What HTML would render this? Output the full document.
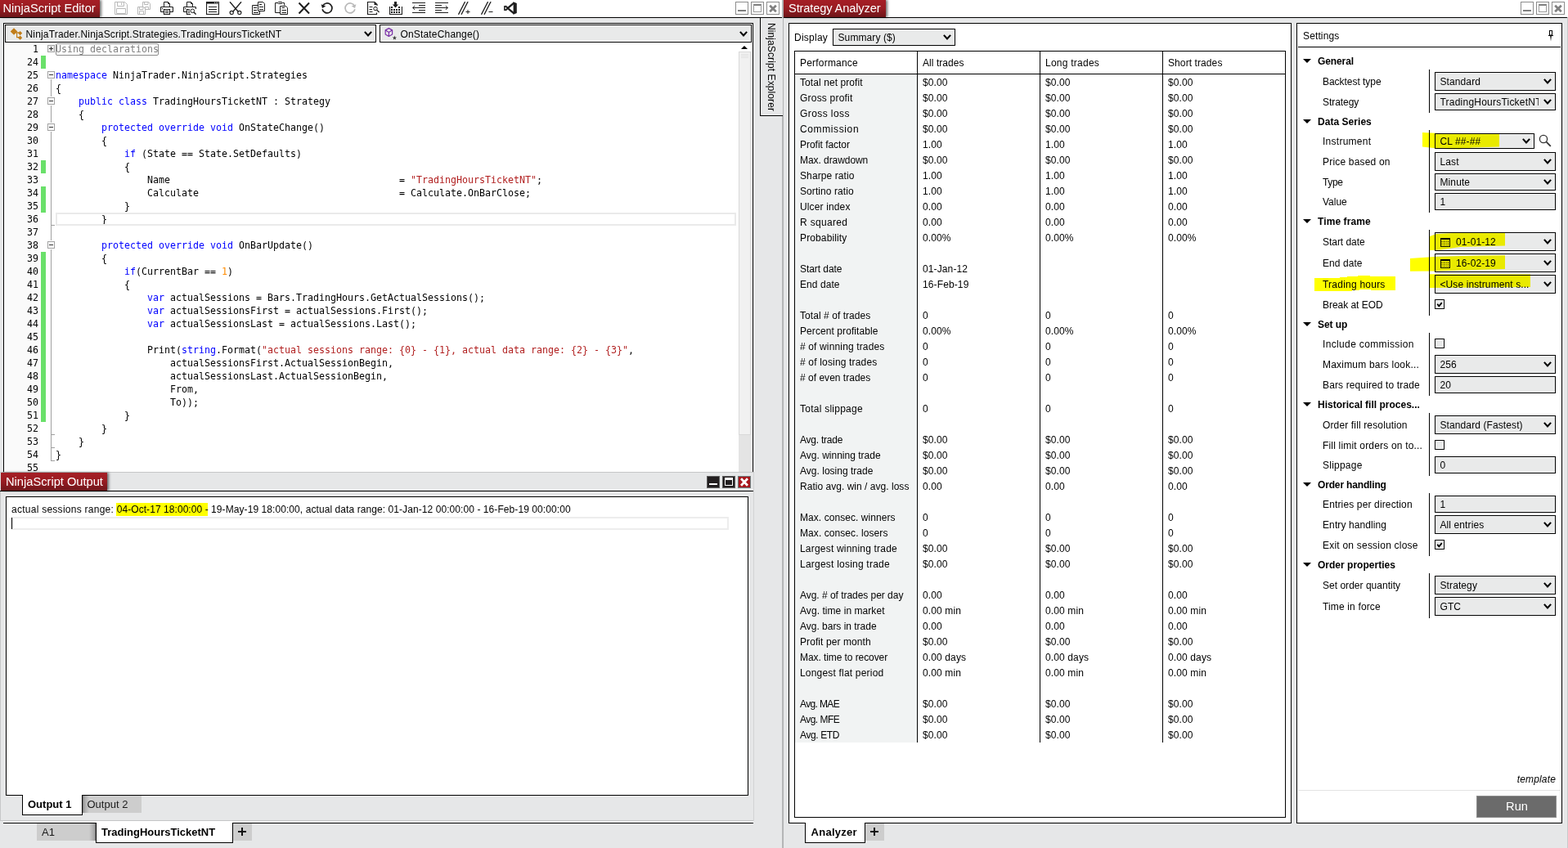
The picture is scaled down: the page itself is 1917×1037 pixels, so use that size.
<!DOCTYPE html><html><head><meta charset="utf-8"><title>NinjaScript Editor</title><style>
*{box-sizing:border-box;margin:0;padding:0}
html,body{width:1917px;height:1037px;overflow:hidden}
body{background:#E6E7E8;font-family:"Liberation Sans",Arial,sans-serif;font-size:12px;color:#000;position:relative}
.abs{position:absolute}
.ttl{position:absolute;height:21px;color:#fff;font-size:14.67px;line-height:21px;padding-left:4px;background:linear-gradient(#A51E25,#9A1C22 45%,#6E161A);box-shadow:2px 0 3px rgba(0,0,0,.55);white-space:nowrap}
.hl{position:absolute;background:#000;height:1px}
.vl{position:absolute;background:#000;width:1px}
.box{position:absolute;border:1px solid #000;background:#fff}
.sel{position:absolute;border:1px solid #000;background:#E9EAEA;box-shadow:inset 0 0 0 1px rgba(255,255,255,.25);font-size:12px;white-space:nowrap;overflow:hidden}
.sel.w{box-shadow:inset 0 0 0 1px #fff}
.sel span.t{position:absolute;left:5.5px;letter-spacing:.1px;top:50%;transform:translateY(-50%);line-height:14px}
.chev{position:absolute;right:4px;top:50%;margin-top:-3.5px;width:10px;height:7px;overflow:visible}
.code{position:absolute;font-family:"DejaVu Sans Mono","Liberation Mono",monospace;font-size:11.63px;line-height:16px;white-space:pre;color:#000;letter-spacing:0}
.kw{color:#0000ff}.st{color:#b22222}.nu{color:#ff8c00}.gy{color:#808080}
.ln{position:absolute;left:6px;width:41px;text-align:right;font-family:"DejaVu Sans Mono","Liberation Mono",monospace;font-size:11.63px;line-height:16px;height:16px;color:#000}
.gb{position:absolute;left:50px;width:6px;background:#6AE06A}
.fold{position:absolute;left:58px;width:9px;height:9px;border:1px solid #A2A2A2;background:#fff}
.fold i{position:absolute;left:1px;top:3px;width:5px;height:1px;background:#333}
.fold b{position:absolute;left:3px;top:1px;width:1px;height:5px;background:#333}
.wb{position:absolute;width:16px;height:16px;border:1px solid #8C8C8C;background:#fff}
.tab{position:absolute;font-size:13px;white-space:nowrap;line-height:21px}
.tab.on{background:#fff;border:1px solid #000;border-top:none;font-weight:bold;height:25px;padding-top:1px}
.tab.off{background:#CDCDCD;height:21px;color:#1a1a1a}
.plus{position:absolute;width:23px;height:21px;background:#CDCDCD}
.plus:before{content:'';position:absolute;left:6px;top:9px;width:10px;height:2px;background:#111}
.plus:after{content:'';position:absolute;left:10px;top:5px;width:2px;height:10px;background:#111}
.cell{position:absolute;font-size:12px;line-height:19px;height:19px;white-space:nowrap;letter-spacing:.12px;margin-top:1px}
.lbl{position:absolute;font-size:12px;line-height:14px;white-space:nowrap;left:1617px}
.grp{position:absolute;font-size:12px;font-weight:bold;line-height:14px;white-space:nowrap;left:1611px}
.tri{position:absolute;left:1592.5px;width:0;height:0;border-left:5px solid transparent;border-right:5px solid transparent;border-top:5.5px solid #000}
.cb{position:absolute;left:1754px;width:12px;height:12px;border:1px solid #000;background:#E9EAEA;box-shadow:inset 0 0 0 1px #fff}
.yl{position:absolute;background:#ffff00;mix-blend-mode:multiply}
</style></head><body>
<div class="hl" style="left:0;top:21px;width:956px"></div>
<div class="abs" style="left:0;top:0;width:956px;height:21px;background:#fff"></div>
<div class="abs" style="left:958px;top:0;width:959px;height:21px;background:#fff"></div>
<div class="ttl" style="left:0;top:0;width:122px;padding-left:3.5px">NinjaScript Editor</div>
<svg class="abs" style="left:140px;top:2px" width="16" height="16" viewBox="0 0 16 16" fill="none" stroke-linecap="butt"><path d="M0.5 0.5H12.5L15.5 3.5V15.5H0.5Z M3.5 0.5V5.5H11.5V0.5 M2.5 14.5V8.5H13.5V14.5Z" stroke="#B9B9B9"/><path d="M8.5 1.5V4" stroke="#B9B9B9"/></svg>
<svg class="abs" style="left:168px;top:2px" width="16" height="16" viewBox="0 0 16 16" fill="none" stroke-linecap="butt"><path d="M6.5 6V0.5H13.5L15.5 2.5V9.5H10 M8.5 0.5V3.5H13V0.5 M9.5 9.5V6.5H13.5V9.5" stroke="#B9B9B9"/><path d="M0.5 6.5H7.5L9.5 8.5V15.5H0.5Z M2.5 6.5V9.5H7V6.5 M2.5 15.5V11.5H7.5V15.5" stroke="#B9B9B9"/></svg>
<svg class="abs" style="left:196px;top:2px" width="16" height="16" viewBox="0 0 16 16" fill="none" stroke-linecap="butt"><path d="M4.5 6.5V0.5H9.5L11.5 2.5V6.5" stroke="#1e1e1e"/><path d="M9.5 0.5V2.5H11.5" stroke="#1e1e1e"/><path d="M4.5 12.5H1.5Q0.5 12.5 0.5 11.5V7.5Q0.5 6.5 1.5 6.5H14.5Q15.5 6.5 15.5 7.5V11.5Q15.5 12.5 14.5 12.5H11.5" stroke="#1e1e1e" stroke-width="1.2"/><path d="M4.5 9.5H11.5V15.5H4.5Z" stroke="#1e1e1e" stroke-width="1.2"/><path d="M6 11.5H10M6 13.5H10" stroke="#1e1e1e"/><rect x="2" y="8" width="1.2" height="1.2" fill="#1e1e1e"/></svg>
<svg class="abs" style="left:224px;top:2px" width="16" height="16" viewBox="0 0 16 16" fill="none" stroke-linecap="butt"><path d="M4.5 6.5V0.5H9.5L11.5 2.5V6.5" stroke="#1e1e1e"/><path d="M9.5 0.5V2.5H11.5" stroke="#1e1e1e"/><path d="M4.5 12.5H1.5Q0.5 12.5 0.5 11.5V7.5Q0.5 6.5 1.5 6.5H14.5Q15.5 6.5 15.5 7.5V9" stroke="#1e1e1e" stroke-width="1.2"/><path d="M8 9.5H4.5V15.5H9" stroke="#1e1e1e" stroke-width="1.2"/><path d="M6 11.5H8M6 13.5H8" stroke="#1e1e1e"/><rect x="2" y="8" width="1.2" height="1.2" fill="#1e1e1e"/><circle cx="11.3" cy="11.3" r="2.3" stroke="#1e1e1e" fill="#fff"/><path d="M13 13L15.6 15.6" stroke="#1e1e1e" stroke-width="1.4"/></svg>
<svg class="abs" style="left:252px;top:2px" width="16" height="16" viewBox="0 0 16 16" fill="none" stroke-linecap="butt"><rect x="0.5" y="0.5" width="15" height="15" stroke="#1e1e1e" stroke-width="1.2"/><rect x="0" y="0" width="16" height="2.6" fill="#1e1e1e"/><path d="M10 1.3h1M12 1.3h1M14 1.3h1" stroke="#fff"/><path d="M3 6.5H13M3 9.5H13M3 12.5H13" stroke="#1e1e1e"/></svg>
<svg class="abs" style="left:280px;top:2px" width="16" height="16" viewBox="0 0 16 16" fill="none" stroke-linecap="butt"><path d="M1 0.3L11.2 12.2M15 0.3L4.8 12.2" stroke="#1e1e1e" stroke-width="1.4"/><circle cx="3.2" cy="13.4" r="2.1" stroke="#1e1e1e" stroke-width="1.2"/><circle cx="12.8" cy="13.4" r="2.1" stroke="#1e1e1e" stroke-width="1.2"/></svg>
<svg class="abs" style="left:308px;top:2px" width="16" height="16" viewBox="0 0 16 16" fill="none" stroke-linecap="butt"><path d="M7.5 0.5H13.5L15.5 2.5V11.5H7.5Z" stroke="#1e1e1e" fill="#fff"/><path d="M9 3.5H12M9 6.5H14M9 9.5H14" stroke="#1e1e1e"/><path d="M7.5 4.5H0.5V15.5H9.5V11.5" stroke="#1e1e1e"/><path d="M2 7.5H6M2 10.5H6M2 13.5H8" stroke="#1e1e1e"/></svg>
<svg class="abs" style="left:336px;top:2px" width="16" height="16" viewBox="0 0 16 16" fill="none" stroke-linecap="butt"><path d="M3 1.5H0.5V13.5H6.5M9.5 1.5H11.5V4.5" stroke="#1e1e1e"/><rect x="3.5" y="0.5" width="5.5" height="2" rx="1" stroke="#1e1e1e"/><path d="M6.5 5.5H13.5L15.5 7.5V15.5H6.5Z" stroke="#1e1e1e"/><path d="M8.5 7.5H12M8.5 10.5H14M8.5 13.5H14" stroke="#1e1e1e"/></svg>
<svg class="abs" style="left:364px;top:2px" width="16" height="16" viewBox="0 0 16 16" fill="none" stroke-linecap="butt"><path d="M1.5 1.5L14 14.5M14 1.5L1.5 14.5" stroke="#1e1e1e" stroke-width="2"/></svg>
<svg class="abs" style="left:392px;top:2px" width="16" height="16" viewBox="0 0 16 16" fill="none" stroke-linecap="butt"><path d="M2.6 5.2A6 6 0 1 1 2.1 9.2" stroke="#1e1e1e" stroke-width="1.7"/><path d="M0.6 3.2L2 8L6.3 5.6Z" fill="#1e1e1e"/></svg>
<svg class="abs" style="left:420px;top:2px" width="16" height="16" viewBox="0 0 16 16" fill="none" stroke-linecap="butt"><path d="M13.4 5.2A6 6 0 1 0 13.9 9.2" stroke="#B9B9B9" stroke-width="1.7"/><path d="M15.4 3.2L14 8L9.7 5.6Z" fill="#B9B9B9"/></svg>
<svg class="abs" style="left:448px;top:2px" width="16" height="16" viewBox="0 0 16 16" fill="none" stroke-linecap="butt"><path d="M13 5V3.5L10 0.5H1.5V15.5H12.5V13.5" stroke="#1e1e1e" stroke-width="1.2"/><path d="M9.5 0.5L13 4H9.5Z" fill="#1e1e1e"/><path d="M3.5 6.5H7.5M3.5 9.5H7M3.5 12.5H7.5" stroke="#1e1e1e"/><circle cx="11" cy="8.6" r="2.2" stroke="#1e1e1e"/><path d="M12.7 10.3L15.6 13" stroke="#1e1e1e" stroke-width="1.3"/></svg>
<svg class="abs" style="left:476px;top:2px" width="16" height="16" viewBox="0 0 16 16" fill="none" stroke-linecap="butt"><path d="M0.5 6V15.5H15.5V6" stroke="#1e1e1e" stroke-width="1.2"/><path d="M7.5 7.6L3.8 3.4H6V0H9V3.4H11.2Z" fill="#1e1e1e"/><rect x="2" y="6" width="2" height="2" fill="#1e1e1e"/><rect x="11" y="6" width="2" height="2" fill="#1e1e1e"/><rect x="2" y="9" width="2" height="2" fill="#1e1e1e"/><rect x="5" y="9" width="2" height="2" fill="#1e1e1e"/><rect x="8" y="9" width="2" height="2" fill="#1e1e1e"/><rect x="11" y="9" width="2" height="2" fill="#1e1e1e"/><rect x="2" y="12" width="2" height="2" fill="#1e1e1e"/><rect x="5" y="12" width="2" height="2" fill="#1e1e1e"/><rect x="8" y="12" width="2" height="2" fill="#1e1e1e"/><rect x="11" y="12" width="2" height="2" fill="#1e1e1e"/></svg>
<svg class="abs" style="left:504px;top:2px" width="16" height="16" viewBox="0 0 16 16" fill="none" stroke-linecap="butt"><path d="M0 1.5H16M8 4.5H16M4 7.5H16M8 10.5H16M0 13.5H16" stroke="#1e1e1e"/><path d="M0.7 7.5H5M3.2 5L0.7 7.5L3.2 10" stroke="#1e1e1e"/></svg>
<svg class="abs" style="left:532px;top:2px" width="16" height="16" viewBox="0 0 16 16" fill="none" stroke-linecap="butt"><path d="M0 1.5H16M0 4.5H8M0 7.5H12M0 10.5H8M0 13.5H16" stroke="#1e1e1e"/><path d="M15.3 7.5H11M12.8 5L15.3 7.5L12.8 10" stroke="#1e1e1e"/></svg>
<svg class="abs" style="left:560px;top:2px" width="16" height="16" viewBox="0 0 16 16" fill="none" stroke-linecap="butt"><path d="M0.5 15.8L8.6 0M4 15.8L12.1 0" stroke="#1e1e1e" stroke-width="1.3"/><path d="M9.5 12.5H14.5M12 10V15" stroke="#1e1e1e"/></svg>
<svg class="abs" style="left:588px;top:2px" width="16" height="16" viewBox="0 0 16 16" fill="none" stroke-linecap="butt"><path d="M0.5 15.8L8.6 0M4 15.8L12.1 0" stroke="#1e1e1e" stroke-width="1.3"/><path d="M9.5 12.5H14.5" stroke="#1e1e1e"/></svg>
<svg class="abs" style="left:616px;top:2px" width="16" height="16" viewBox="0 0 16 16" fill="none" stroke-linecap="butt"><path d="M12.6 1.4L1.6 10.6M12.6 14.6L1.6 5.4" stroke="#1e1e1e" stroke-width="2.3"/><path d="M11.6 0.2L15.8 2V14L11.6 15.8Z" fill="#1e1e1e"/><path d="M0.9 5V11" stroke="#1e1e1e" stroke-width="1.6"/><path d="M1.9 6.6L3.4 8L1.9 9.4Z" fill="#fff"/></svg>
<div class="abs" style="left:956px;top:0;width:2px;height:1037px;background:linear-gradient(90deg,#BCBDBE,#ADAEAF)"></div>
<div class="abs" style="left:0;top:601px;width:1px;height:403px;background:#C6C7C8"></div>
<div class="wb" style="left:899px;top:2px"><div class="abs" style="left:2px;top:9px;width:10px;height:2px;background:#808080"></div></div>
<div class="wb" style="left:918px;top:2px"><div class="abs" style="left:2px;top:2px;width:10px;height:10px;border:1px solid #9a9a9a;border-top:2px solid #808080"></div></div>
<div class="wb" style="left:937px;top:2px"><svg class="abs" style="left:1px;top:2px" width="12" height="11" viewBox="0 0 12 11"><path d="M2.2 1.7L9.8 9.3M9.8 1.7L2.2 9.3" stroke="#808080" stroke-width="2.7"/></svg></div>
<div class="box" style="left:4px;top:28px;width:917px;height:549px;border-bottom:none"></div>
<div class="abs" style="left:7px;top:52px;width:42px;height:525px;background:#FAFAFA"></div>
<div class="sel w" style="left:6px;top:30px;width:454px;height:22px"><svg class="abs" style="left:4px;top:1.5px" width="17" height="17" viewBox="0 0 17 17"><path d="M6 1.2L10.3 5.5L6 9.8L1.7 5.5Z" fill="#C17D1A"/><path d="M13.6 5L16.2 7.6L13.6 10.2L11 7.6Z M13.6 10.6L16.2 13.2L13.6 15.8L11 13.2Z" fill="#C17D1A"/><path d="M8 6.9H12M9.6 6.9V12.6H12" stroke="#C17D1A" stroke-width="1.2" fill="none"/></svg><span class="t" style="left:24.5px;letter-spacing:.17px;margin-top:1px">NinjaTrader.NinjaScript.Strategies.TradingHoursTicketNT</span><svg class="chev" viewBox="0 0 10 7"><path d="M0.9 0.9 L5 5.5 L9.1 0.9" fill="none" stroke="#000" stroke-width="2.1"/></svg></div>
<div class="sel w" style="left:464px;top:30px;width:455px;height:22px"><svg class="abs" style="left:4px;top:2px" width="18" height="17" viewBox="0 0 18 17"><path d="M6.4 1.6L10.6 3.9V8.9L6.4 11.4L2.2 8.9V3.9Z M2.4 4L6.4 6.4L10.4 4 M6.4 6.4V11.2" fill="none" stroke="#7A2FA8" stroke-width="1.2" stroke-linejoin="round"/><path d="M13.4 10.6L14.1 12.6H16.1L14.5 13.8L15.1 15.8L13.4 14.6L11.7 15.8L12.3 13.8L10.7 12.6H12.7Z" fill="#3a3a3a"/></svg><span class="t" style="left:24.5px;letter-spacing:.17px;margin-top:1px">OnStateChange()</span><svg class="chev" viewBox="0 0 10 7"><path d="M0.9 0.9 L5 5.5 L9.1 0.9" fill="none" stroke="#000" stroke-width="2.1"/></svg></div>
<div class="ln" style="top:52px">1</div>
<div class="code" style="left:68px;top:52px"><span class="gy">Using declarations</span></div>
<div class="ln" style="top:68px">24</div>
<div class="gb" style="top:68px;height:16px"></div>
<div class="ln" style="top:84px">25</div>
<div class="code" style="left:68px;top:84px"><span class="kw">namespace</span> NinjaTrader.NinjaScript.Strategies</div>
<div class="ln" style="top:100px">26</div>
<div class="code" style="left:68px;top:100px">{</div>
<div class="ln" style="top:116px">27</div>
<div class="code" style="left:68px;top:116px">    <span class="kw">public</span> <span class="kw">class</span> TradingHoursTicketNT : Strategy</div>
<div class="ln" style="top:132px">28</div>
<div class="code" style="left:68px;top:132px">    {</div>
<div class="ln" style="top:148px">29</div>
<div class="code" style="left:68px;top:148px">        <span class="kw">protected</span> <span class="kw">override</span> <span class="kw">void</span> OnStateChange()</div>
<div class="ln" style="top:164px">30</div>
<div class="code" style="left:68px;top:164px">        {</div>
<div class="ln" style="top:180px">31</div>
<div class="code" style="left:68px;top:180px">            <span class="kw">if</span> (State == State.SetDefaults)</div>
<div class="ln" style="top:196px">32</div>
<div class="gb" style="top:196px;height:16px"></div>
<div class="code" style="left:68px;top:196px">            {</div>
<div class="ln" style="top:212px">33</div>
<div class="code" style="left:68px;top:212px">                Name                                        = <span class="st">&quot;TradingHoursTicketNT&quot;</span>;</div>
<div class="ln" style="top:228px">34</div>
<div class="gb" style="top:228px;height:16px"></div>
<div class="code" style="left:68px;top:228px">                Calculate                                   = Calculate.OnBarClose;</div>
<div class="ln" style="top:244px">35</div>
<div class="gb" style="top:244px;height:16px"></div>
<div class="code" style="left:68px;top:244px">            }</div>
<div class="ln" style="top:260px">36</div>
<div class="code" style="left:68px;top:260px">        }</div>
<div class="ln" style="top:276px">37</div>
<div class="ln" style="top:292px">38</div>
<div class="code" style="left:68px;top:292px">        <span class="kw">protected</span> <span class="kw">override</span> <span class="kw">void</span> OnBarUpdate()</div>
<div class="ln" style="top:308px">39</div>
<div class="gb" style="top:308px;height:16px"></div>
<div class="code" style="left:68px;top:308px">        {</div>
<div class="ln" style="top:324px">40</div>
<div class="gb" style="top:324px;height:16px"></div>
<div class="code" style="left:68px;top:324px">            <span class="kw">if</span>(CurrentBar == <span class="nu">1</span>)</div>
<div class="ln" style="top:340px">41</div>
<div class="gb" style="top:340px;height:16px"></div>
<div class="code" style="left:68px;top:340px">            {</div>
<div class="ln" style="top:356px">42</div>
<div class="gb" style="top:356px;height:16px"></div>
<div class="code" style="left:68px;top:356px">                <span class="kw">var</span> actualSessions = Bars.TradingHours.GetActualSessions();</div>
<div class="ln" style="top:372px">43</div>
<div class="gb" style="top:372px;height:16px"></div>
<div class="code" style="left:68px;top:372px">                <span class="kw">var</span> actualSessionsFirst = actualSessions.First();</div>
<div class="ln" style="top:388px">44</div>
<div class="gb" style="top:388px;height:16px"></div>
<div class="code" style="left:68px;top:388px">                <span class="kw">var</span> actualSessionsLast = actualSessions.Last();</div>
<div class="ln" style="top:404px">45</div>
<div class="gb" style="top:404px;height:16px"></div>
<div class="ln" style="top:420px">46</div>
<div class="gb" style="top:420px;height:16px"></div>
<div class="code" style="left:68px;top:420px">                Print(<span class="kw">string</span>.Format(<span class="st">&quot;actual sessions range: {0} - {1}, actual data range: {2} - {3}&quot;</span>,</div>
<div class="ln" style="top:436px">47</div>
<div class="gb" style="top:436px;height:16px"></div>
<div class="code" style="left:68px;top:436px">                    actualSessionsFirst.ActualSessionBegin,</div>
<div class="ln" style="top:452px">48</div>
<div class="gb" style="top:452px;height:16px"></div>
<div class="code" style="left:68px;top:452px">                    actualSessionsLast.ActualSessionBegin,</div>
<div class="ln" style="top:468px">49</div>
<div class="gb" style="top:468px;height:16px"></div>
<div class="code" style="left:68px;top:468px">                    From,</div>
<div class="ln" style="top:484px">50</div>
<div class="gb" style="top:484px;height:16px"></div>
<div class="code" style="left:68px;top:484px">                    To));</div>
<div class="ln" style="top:500px">51</div>
<div class="gb" style="top:500px;height:16px"></div>
<div class="code" style="left:68px;top:500px">            }</div>
<div class="ln" style="top:516px">52</div>
<div class="code" style="left:68px;top:516px">        }</div>
<div class="ln" style="top:532px">53</div>
<div class="code" style="left:68px;top:532px">    }</div>
<div class="ln" style="top:548px">54</div>
<div class="code" style="left:68px;top:548px">}</div>
<div class="ln" style="top:564px">55</div>
<div class="abs" style="left:68px;top:260px;width:832px;height:16px;border:2px solid #EAEAEA"></div>
<div class="abs" style="left:68px;top:52.7px;width:126px;height:15.3px;border:1px solid #8c8c8c;border-radius:2px"></div>
<div class="fold" style="top:55px;background:#ECECEC"><i></i><b></b></div>
<div class="fold" style="top:87px"><i></i></div>
<div class="fold" style="top:119px"><i></i></div>
<div class="fold" style="top:151px"><i></i></div>
<div class="fold" style="top:295px"><i></i></div>
<div class="abs" style="left:62px;top:97px;width:1px;height:21px;background:#A0A0A0"></div>
<div class="abs" style="left:62px;top:129px;width:1px;height:21px;background:#A0A0A0"></div>
<div class="abs" style="left:62px;top:161px;width:1px;height:133px;background:#A0A0A0"></div>
<div class="abs" style="left:62px;top:305px;width:1px;height:243px;background:#A0A0A0"></div>
<div class="abs" style="left:62px;top:275px;width:5px;height:1px;background:#A0A0A0"></div>
<div class="abs" style="left:62px;top:531px;width:5px;height:1px;background:#A0A0A0"></div>
<div class="abs" style="left:62px;top:547px;width:5px;height:1px;background:#A0A0A0"></div>
<div class="abs" style="left:62px;top:563px;width:5px;height:1px;background:#A0A0A0"></div>
<div class="abs" style="left:62px;top:548px;width:1px;height:16px;background:#A0A0A0"></div>
<div class="abs" style="left:903px;top:52px;width:16px;height:525px;background:#fff"></div>
<div class="abs" style="left:903px;top:63px;width:15px;height:469px;background:#F1F1F1;border:1px solid #D9D9D9"></div>
<div class="abs" style="left:906px;top:66px;width:9px;height:1px;background:#E2E2E2;box-shadow:0 2px 0 #E2E2E2,0 4px 0 #E2E2E2"></div>
<div class="abs" style="left:906px;top:56px;width:0;height:0;border-left:4px solid transparent;border-right:4px solid transparent;border-bottom:4px solid #000"></div>
<div class="abs" style="left:903px;top:532px;width:15px;height:45px;background:#E4E4E4"></div>
<div class="abs" style="left:929px;top:22px;width:28px;height:120px;border:1px solid #000;border-top:none;border-right:none;background:#E6E7E8"></div>
<div class="abs" style="left:933.5px;top:28px;width:18px;height:110px;writing-mode:vertical-rl;font-size:12px;line-height:18px;white-space:nowrap;letter-spacing:.1px">NinjaScript Explorer</div>
<div class="abs" style="left:0;top:577px;width:922px;height:1px;background:#C6C7C8"></div>
<div class="ttl" style="left:1px;top:578px;width:130px;height:22px;line-height:22px;padding-left:6px">NinjaScript Output</div>
<div class="hl" style="left:0;top:600px;width:921px"></div>
<div class="abs" style="left:921px;top:578px;width:1px;height:426px;background:#D2D3D4"></div>
<div class="box" style="left:7px;top:607px;width:908px;height:366px"></div>
<div class="abs" style="left:142px;top:615px;width:112px;height:16px;background:#ffff00"></div>
<div class="abs" style="left:14px;top:615px;font-size:12px;line-height:16px;white-space:pre"><span style="letter-spacing:0.259px">actual sessions range: </span><span style="letter-spacing:0.063px">04-Oct-17 18:00:00 - </span><span style="letter-spacing:0.076px">19-May-19 18:00:00, actual data range: 01-Jan-12 00:00:00 - 16-Feb-19 00:00:00</span></div>
<div class="abs" style="left:14px;top:632px;width:877px;height:16px;border:2px solid #EDEDED"></div>
<div class="abs" style="left:14px;top:633px;width:1px;height:14px;background:#000"></div>
<div class="abs" style="left:864px;top:582px;width:16px;height:15px;background:#231F20;border:1px solid #5f5f5f"><div class="abs" style="left:2px;top:8px;width:10px;height:2px;background:#fff"></div></div>
<div class="abs" style="left:883px;top:582px;width:16px;height:15px;background:#231F20;border:1px solid #5f5f5f"><div class="abs" style="left:2px;top:1px;width:10px;height:10px;border:1px solid #fff;border-top:3px solid #fff"></div></div>
<div class="abs" style="left:902px;top:582px;width:16px;height:15px;background:#A8171D;border:1px solid #6d7c7c"><svg class="abs" style="left:2px;top:1px" width="10" height="11" viewBox="0 0 10 11"><path d="M1 1.2L9 9.8M9 1.2L1 9.8" stroke="#fff" stroke-width="2.8"/></svg></div>
<div class="tab on" style="left:27px;top:972px;width:74px;padding-left:6px">Output 1</div>
<div class="tab off" style="left:101px;top:973px;width:72px;padding-left:5.5px;background:linear-gradient(90deg,#777 0,#a8a8a8 2px,#CDCDCD 8px)">Output 2</div>
<div class="abs" style="left:0;top:1003px;width:921px;height:1px;background:#C4C5C6"></div>
<div class="abs" style="left:4px;top:1004px;width:917px;height:2px;background:#fff"></div>
<div class="hl" style="left:4px;top:1006px;width:917px"></div>
<div class="tab off" style="left:45px;top:1007px;width:72px;padding-left:6px;background:linear-gradient(270deg,#777 0,#a8a8a8 2px,#CDCDCD 8px)">A1</div>
<div class="tab on" style="left:117px;top:1006px;width:168px;padding-left:6px">TradingHoursTicketNT</div>
<div class="plus" style="left:285px;top:1007px"></div>
<div class="ttl" style="left:958px;top:0;width:125px;padding-left:6px;letter-spacing:-.14px">Strategy Analyzer</div>
<div class="hl" style="left:958px;top:21px;width:959px"></div>
<div class="wb" style="left:1859px;top:2px"><div class="abs" style="left:2px;top:9px;width:10px;height:2px;background:#808080"></div></div>
<div class="wb" style="left:1878px;top:2px"><div class="abs" style="left:2px;top:2px;width:10px;height:10px;border:1px solid #9a9a9a;border-top:2px solid #808080"></div></div>
<div class="wb" style="left:1897px;top:2px"><svg class="abs" style="left:1px;top:2px" width="12" height="11" viewBox="0 0 12 11"><path d="M2.2 1.7L9.8 9.3M9.8 1.7L2.2 9.3" stroke="#808080" stroke-width="2.7"/></svg></div>
<div class="box" style="left:964px;top:28px;width:615px;height:979px"></div>
<div class="abs" style="left:971px;top:39px;font-size:12px;line-height:14px;letter-spacing:.25px">Display</div>
<div class="sel" style="left:1018px;top:35px;width:150px;height:21px"><span class="t">Summary ($)</span><svg class="chev" viewBox="0 0 10 7"><path d="M0.9 0.9 L5 5.5 L9.1 0.9" fill="none" stroke="#000" stroke-width="2.1"/></svg></div>
<div class="box" style="left:971px;top:62px;width:601px;height:938px"></div>
<div class="abs" style="left:972px;top:91px;width:149px;height:817px;background:#F1F3F3"></div>
<div class="hl" style="left:971px;top:90px;width:601px"></div>
<div class="vl" style="left:1121px;top:62px;height:846px"></div>
<div class="vl" style="left:1271px;top:62px;height:846px"></div>
<div class="vl" style="left:1421px;top:62px;height:846px"></div>
<div class="cell" style="left:978px;top:67px;letter-spacing:0.2px">Performance</div>
<div class="cell" style="left:1128px;top:67px;letter-spacing:0.052px">All trades</div>
<div class="cell" style="left:1278px;top:67px;letter-spacing:0.241px">Long trades</div>
<div class="cell" style="left:1428px;top:67px;letter-spacing:0.093px">Short trades</div>
<div class="cell" style="left:978px;top:91px;letter-spacing:0.082px">Total net profit</div>
<div class="cell" style="left:1128px;top:91px">$0.00</div>
<div class="cell" style="left:1278px;top:91px">$0.00</div>
<div class="cell" style="left:1428px;top:91px">$0.00</div>
<div class="cell" style="left:978px;top:110px;letter-spacing:0.208px">Gross profit</div>
<div class="cell" style="left:1128px;top:110px">$0.00</div>
<div class="cell" style="left:1278px;top:110px">$0.00</div>
<div class="cell" style="left:1428px;top:110px">$0.00</div>
<div class="cell" style="left:978px;top:129px;letter-spacing:0.412px">Gross loss</div>
<div class="cell" style="left:1128px;top:129px">$0.00</div>
<div class="cell" style="left:1278px;top:129px">$0.00</div>
<div class="cell" style="left:1428px;top:129px">$0.00</div>
<div class="cell" style="left:978px;top:148px;letter-spacing:0.62px">Commission</div>
<div class="cell" style="left:1128px;top:148px">$0.00</div>
<div class="cell" style="left:1278px;top:148px">$0.00</div>
<div class="cell" style="left:1428px;top:148px">$0.00</div>
<div class="cell" style="left:978px;top:167px;letter-spacing:-0.03px">Profit factor</div>
<div class="cell" style="left:1128px;top:167px">1.00</div>
<div class="cell" style="left:1278px;top:167px">1.00</div>
<div class="cell" style="left:1428px;top:167px">1.00</div>
<div class="cell" style="left:978px;top:186px;letter-spacing:-0.062px">Max. drawdown</div>
<div class="cell" style="left:1128px;top:186px">$0.00</div>
<div class="cell" style="left:1278px;top:186px">$0.00</div>
<div class="cell" style="left:1428px;top:186px">$0.00</div>
<div class="cell" style="left:978px;top:205px;letter-spacing:0.102px">Sharpe ratio</div>
<div class="cell" style="left:1128px;top:205px">1.00</div>
<div class="cell" style="left:1278px;top:205px">1.00</div>
<div class="cell" style="left:1428px;top:205px">1.00</div>
<div class="cell" style="left:978px;top:224px;letter-spacing:0.075px">Sortino ratio</div>
<div class="cell" style="left:1128px;top:224px">1.00</div>
<div class="cell" style="left:1278px;top:224px">1.00</div>
<div class="cell" style="left:1428px;top:224px">1.00</div>
<div class="cell" style="left:978px;top:243px;letter-spacing:0.137px">Ulcer index</div>
<div class="cell" style="left:1128px;top:243px">0.00</div>
<div class="cell" style="left:1278px;top:243px">0.00</div>
<div class="cell" style="left:1428px;top:243px">0.00</div>
<div class="cell" style="left:978px;top:262px;letter-spacing:0.316px">R squared</div>
<div class="cell" style="left:1128px;top:262px">0.00</div>
<div class="cell" style="left:1278px;top:262px">0.00</div>
<div class="cell" style="left:1428px;top:262px">0.00</div>
<div class="cell" style="left:978px;top:281px;letter-spacing:0.127px">Probability</div>
<div class="cell" style="left:1128px;top:281px">0.00%</div>
<div class="cell" style="left:1278px;top:281px">0.00%</div>
<div class="cell" style="left:1428px;top:281px">0.00%</div>
<div class="cell" style="left:978px;top:319px;letter-spacing:-0.059px">Start date</div>
<div class="cell" style="left:1128px;top:319px">01-Jan-12</div>
<div class="cell" style="left:978px;top:338px;letter-spacing:0.065px">End date</div>
<div class="cell" style="left:1128px;top:338px">16-Feb-19</div>
<div class="cell" style="left:978px;top:376px;letter-spacing:0.057px">Total # of trades</div>
<div class="cell" style="left:1128px;top:376px">0</div>
<div class="cell" style="left:1278px;top:376px">0</div>
<div class="cell" style="left:1428px;top:376px">0</div>
<div class="cell" style="left:978px;top:395px;letter-spacing:0.079px">Percent profitable</div>
<div class="cell" style="left:1128px;top:395px">0.00%</div>
<div class="cell" style="left:1278px;top:395px">0.00%</div>
<div class="cell" style="left:1428px;top:395px">0.00%</div>
<div class="cell" style="left:978px;top:414px;letter-spacing:0.143px"># of winning trades</div>
<div class="cell" style="left:1128px;top:414px">0</div>
<div class="cell" style="left:1278px;top:414px">0</div>
<div class="cell" style="left:1428px;top:414px">0</div>
<div class="cell" style="left:978px;top:433px;letter-spacing:0.171px"># of losing trades</div>
<div class="cell" style="left:1128px;top:433px">0</div>
<div class="cell" style="left:1278px;top:433px">0</div>
<div class="cell" style="left:1428px;top:433px">0</div>
<div class="cell" style="left:978px;top:452px;letter-spacing:0.016px"># of even trades</div>
<div class="cell" style="left:1128px;top:452px">0</div>
<div class="cell" style="left:1278px;top:452px">0</div>
<div class="cell" style="left:1428px;top:452px">0</div>
<div class="cell" style="left:978px;top:490px;letter-spacing:0.247px">Total slippage</div>
<div class="cell" style="left:1128px;top:490px">0</div>
<div class="cell" style="left:1278px;top:490px">0</div>
<div class="cell" style="left:1428px;top:490px">0</div>
<div class="cell" style="left:978px;top:528px;letter-spacing:-0.232px">Avg. trade</div>
<div class="cell" style="left:1128px;top:528px">$0.00</div>
<div class="cell" style="left:1278px;top:528px">$0.00</div>
<div class="cell" style="left:1428px;top:528px">$0.00</div>
<div class="cell" style="left:978px;top:547px;letter-spacing:0.005px">Avg. winning trade</div>
<div class="cell" style="left:1128px;top:547px">$0.00</div>
<div class="cell" style="left:1278px;top:547px">$0.00</div>
<div class="cell" style="left:1428px;top:547px">$0.00</div>
<div class="cell" style="left:978px;top:566px;letter-spacing:0.014px">Avg. losing trade</div>
<div class="cell" style="left:1128px;top:566px">$0.00</div>
<div class="cell" style="left:1278px;top:566px">$0.00</div>
<div class="cell" style="left:1428px;top:566px">$0.00</div>
<div class="cell" style="left:978px;top:585px;letter-spacing:0.027px">Ratio avg. win / avg. loss</div>
<div class="cell" style="left:1128px;top:585px">0.00</div>
<div class="cell" style="left:1278px;top:585px">0.00</div>
<div class="cell" style="left:1428px;top:585px">0.00</div>
<div class="cell" style="left:978px;top:623px;letter-spacing:0.058px">Max. consec. winners</div>
<div class="cell" style="left:1128px;top:623px">0</div>
<div class="cell" style="left:1278px;top:623px">0</div>
<div class="cell" style="left:1428px;top:623px">0</div>
<div class="cell" style="left:978px;top:642px;letter-spacing:0.075px">Max. consec. losers</div>
<div class="cell" style="left:1128px;top:642px">0</div>
<div class="cell" style="left:1278px;top:642px">0</div>
<div class="cell" style="left:1428px;top:642px">0</div>
<div class="cell" style="left:978px;top:661px;letter-spacing:0.198px">Largest winning trade</div>
<div class="cell" style="left:1128px;top:661px">$0.00</div>
<div class="cell" style="left:1278px;top:661px">$0.00</div>
<div class="cell" style="left:1428px;top:661px">$0.00</div>
<div class="cell" style="left:978px;top:680px;letter-spacing:0.221px">Largest losing trade</div>
<div class="cell" style="left:1128px;top:680px">$0.00</div>
<div class="cell" style="left:1278px;top:680px">$0.00</div>
<div class="cell" style="left:1428px;top:680px">$0.00</div>
<div class="cell" style="left:978px;top:718px;letter-spacing:-0.035px">Avg. # of trades per day</div>
<div class="cell" style="left:1128px;top:718px">0.00</div>
<div class="cell" style="left:1278px;top:718px">0.00</div>
<div class="cell" style="left:1428px;top:718px">0.00</div>
<div class="cell" style="left:978px;top:737px;letter-spacing:0.056px">Avg. time in market</div>
<div class="cell" style="left:1128px;top:737px">0.00 min</div>
<div class="cell" style="left:1278px;top:737px">0.00 min</div>
<div class="cell" style="left:1428px;top:737px">0.00 min</div>
<div class="cell" style="left:978px;top:756px;letter-spacing:-0.014px">Avg. bars in trade</div>
<div class="cell" style="left:1128px;top:756px">0.00</div>
<div class="cell" style="left:1278px;top:756px">0.00</div>
<div class="cell" style="left:1428px;top:756px">0.00</div>
<div class="cell" style="left:978px;top:775px;letter-spacing:0.082px">Profit per month</div>
<div class="cell" style="left:1128px;top:775px">$0.00</div>
<div class="cell" style="left:1278px;top:775px">$0.00</div>
<div class="cell" style="left:1428px;top:775px">$0.00</div>
<div class="cell" style="left:978px;top:794px;letter-spacing:-0.079px">Max. time to recover</div>
<div class="cell" style="left:1128px;top:794px">0.00 days</div>
<div class="cell" style="left:1278px;top:794px">0.00 days</div>
<div class="cell" style="left:1428px;top:794px">0.00 days</div>
<div class="cell" style="left:978px;top:813px;letter-spacing:0.192px">Longest flat period</div>
<div class="cell" style="left:1128px;top:813px">0.00 min</div>
<div class="cell" style="left:1278px;top:813px">0.00 min</div>
<div class="cell" style="left:1428px;top:813px">0.00 min</div>
<div class="cell" style="left:978px;top:851px;letter-spacing:-0.634px">Avg. MAE</div>
<div class="cell" style="left:1128px;top:851px">$0.00</div>
<div class="cell" style="left:1278px;top:851px">$0.00</div>
<div class="cell" style="left:1428px;top:851px">$0.00</div>
<div class="cell" style="left:978px;top:870px;letter-spacing:-0.538px">Avg. MFE</div>
<div class="cell" style="left:1128px;top:870px">$0.00</div>
<div class="cell" style="left:1278px;top:870px">$0.00</div>
<div class="cell" style="left:1428px;top:870px">$0.00</div>
<div class="cell" style="left:978px;top:889px;letter-spacing:-0.377px">Avg. ETD</div>
<div class="cell" style="left:1128px;top:889px">$0.00</div>
<div class="cell" style="left:1278px;top:889px">$0.00</div>
<div class="cell" style="left:1428px;top:889px">$0.00</div>
<div class="tab on" style="left:984px;top:1006px;width:74px;padding-left:6.5px;letter-spacing:.28px">Analyzer</div>
<div class="plus" style="left:1058px;top:1007px"></div>
<div class="box" style="left:1585px;top:28px;width:325px;height:979px"></div>
<div class="abs" style="left:1593px;top:37px;font-size:12px;line-height:14px;letter-spacing:.13px">Settings</div>
<div class="hl" style="left:1587px;top:57px;width:321px"></div>
<div class="abs" style="left:1587px;top:966px;width:321px;height:1px;background:#E3E3E3"></div>
<div class="abs" style="left:1805px;top:973px;width:98px;height:27px;background:#6B6B6B;border:1px solid #8E8E8E;color:#fff;font-size:14.67px;line-height:25px;text-align:center;padding-left:1px">Run</div>
<div class="abs" style="left:1802px;top:946px;width:100px;text-align:right;font-style:italic;font-size:12px;line-height:14px;letter-spacing:.15px">template</div>
<svg class="abs" style="left:1892px;top:36px" width="8" height="15" viewBox="0 0 8 15"><rect x="2.5" y="1.5" width="3" height="5.5" fill="#fff" stroke="#000"/><path d="M1 7.5H7" stroke="#000"/><path d="M3.2 8L4 14.5L4.8 8Z" fill="#000"/></svg>
<div class="abs" style="left:1916px;top:21px;width:1px;height:1016px;background:#C9CACB"></div>
<div class="tri" style="top:72px"></div><div class="grp" style="top:68px;left:1611px;letter-spacing:-0.1px">General</div>
<div class="lbl" style="top:93px;left:1617px;letter-spacing:-0.034px">Backtest type</div>
<div class="sel" style="left:1754px;top:88px;width:148px;height:23px"><span class="t">Standard</span><svg class="chev" viewBox="0 0 10 7"><path d="M0.9 0.9 L5 5.5 L9.1 0.9" fill="none" stroke="#000" stroke-width="2.1"/></svg></div>
<div class="lbl" style="top:118px;left:1617px;letter-spacing:-0.05px">Strategy</div>
<div class="sel" style="left:1754px;top:114px;width:148px;height:21px"><span class="t" style="width:120px;overflow:hidden;letter-spacing:.22px">TradingHoursTicketNT</span><span class="t"></span><svg class="chev" viewBox="0 0 10 7"><path d="M0.9 0.9 L5 5.5 L9.1 0.9" fill="none" stroke="#000" stroke-width="2.1"/></svg></div>
<div class="vl" style="left:1747px;top:85px;height:53px"></div>
<div class="tri" style="top:146px"></div><div class="grp" style="top:142px;left:1611px;letter-spacing:0.039px">Data Series</div>
<div class="lbl" style="top:166px;left:1617px;letter-spacing:0.26px">Instrument</div>
<div class="sel" style="left:1754px;top:163px;width:122px;height:19px"><span class="t">CL ##-##</span><svg class="chev" viewBox="0 0 10 7"><path d="M0.9 0.9 L5 5.5 L9.1 0.9" fill="none" stroke="#000" stroke-width="2.1"/></svg></div>
<svg class="abs" style="left:1881px;top:164px" width="16" height="16" viewBox="0 0 16 16"><circle cx="6" cy="6" r="4.6" fill="none" stroke="#333" stroke-width="1.3"/><path d="M9.4 9.4L14.8 14.8" stroke="#333" stroke-width="1.8"/></svg>
<div class="lbl" style="top:191px;left:1617px;letter-spacing:0.188px">Price based on</div>
<div class="sel" style="left:1754px;top:186px;width:148px;height:23px"><span class="t">Last</span><svg class="chev" viewBox="0 0 10 7"><path d="M0.9 0.9 L5 5.5 L9.1 0.9" fill="none" stroke="#000" stroke-width="2.1"/></svg></div>
<div class="lbl" style="top:216px;left:1617px;letter-spacing:-0.329px">Type</div>
<div class="sel" style="left:1754px;top:212px;width:148px;height:21px"><span class="t">Minute</span><svg class="chev" viewBox="0 0 10 7"><path d="M0.9 0.9 L5 5.5 L9.1 0.9" fill="none" stroke="#000" stroke-width="2.1"/></svg></div>
<div class="lbl" style="top:240px;left:1617px;letter-spacing:-0.022px">Value</div>
<div class="sel" style="left:1754px;top:236px;width:148px;height:21px"><span class="t">1</span></div>
<div class="vl" style="left:1747px;top:159px;height:101px"></div>
<div class="tri" style="top:268px"></div><div class="grp" style="top:264px;left:1611px;letter-spacing:0.099px">Time frame</div>
<div class="lbl" style="top:289px;left:1617px;letter-spacing:-0.043px">Start date</div>
<div class="sel" style="left:1754px;top:284px;width:148px;height:23px"><svg class="abs" style="left:6px;top:6px" width="12" height="11" viewBox="0 0 12 11"><rect x="0.5" y="0.5" width="11" height="10" fill="none" stroke="#111"/><rect x="0" y="0" width="12" height="2" fill="#000"/><path d="M2 3.5v1.6M4.5 3.5v1.6M7 3.5v1.6M9.5 3.5v1.6M2 6v1M4.5 6v1M7 6v1M9.5 6v1M2 8v1M4.5 8v1M7 8v1M9.5 8v1" stroke="#3a2a10" stroke-width="1"/></svg><span class="t" style="left:25px">01-01-12</span><span class="t"></span><svg class="chev" viewBox="0 0 10 7"><path d="M0.9 0.9 L5 5.5 L9.1 0.9" fill="none" stroke="#000" stroke-width="2.1"/></svg></div>
<div class="lbl" style="top:315px;left:1617px;letter-spacing:0.069px">End date</div>
<div class="sel" style="left:1754px;top:310px;width:148px;height:23px"><svg class="abs" style="left:6px;top:6px" width="12" height="11" viewBox="0 0 12 11"><rect x="0.5" y="0.5" width="11" height="10" fill="none" stroke="#111"/><rect x="0" y="0" width="12" height="2" fill="#000"/><path d="M2 3.5v1.6M4.5 3.5v1.6M7 3.5v1.6M9.5 3.5v1.6M2 6v1M4.5 6v1M7 6v1M9.5 6v1M2 8v1M4.5 8v1M7 8v1M9.5 8v1" stroke="#3a2a10" stroke-width="1"/></svg><span class="t" style="left:25px">16-02-19</span><span class="t"></span><svg class="chev" viewBox="0 0 10 7"><path d="M0.9 0.9 L5 5.5 L9.1 0.9" fill="none" stroke="#000" stroke-width="2.1"/></svg></div>
<div class="lbl" style="top:341px;left:1617px;letter-spacing:0.231px">Trading hours</div>
<div class="sel" style="left:1754px;top:336px;width:148px;height:23px"><span class="t">&lt;Use instrument s...</span><svg class="chev" viewBox="0 0 10 7"><path d="M0.9 0.9 L5 5.5 L9.1 0.9" fill="none" stroke="#000" stroke-width="2.1"/></svg></div>
<div class="lbl" style="top:366px;left:1617px;letter-spacing:-0.036px">Break at EOD</div>
<div class="cb" style="top:366px"><svg class="abs" style="left:1px;top:1px" width="8" height="8" viewBox="0 0 8 8"><path d="M1.2 3.8 L3.3 6.4 L6.8 2.2" fill="none" stroke="#000" stroke-width="1.8"/></svg></div>
<div class="vl" style="left:1747px;top:281px;height:105px"></div>
<div class="tri" style="top:394px"></div><div class="grp" style="top:390px;left:1611px;letter-spacing:-0.062px">Set up</div>
<div class="lbl" style="top:414px;left:1617px;letter-spacing:0.351px">Include commission</div>
<div class="cb" style="top:414px"></div>
<div class="lbl" style="top:439px;left:1617px;letter-spacing:0.198px">Maximum bars look...</div>
<div class="sel" style="left:1754px;top:434px;width:148px;height:23px"><span class="t">256</span><svg class="chev" viewBox="0 0 10 7"><path d="M0.9 0.9 L5 5.5 L9.1 0.9" fill="none" stroke="#000" stroke-width="2.1"/></svg></div>
<div class="lbl" style="top:464px;left:1617px;letter-spacing:0.124px">Bars required to trade</div>
<div class="sel" style="left:1754px;top:460px;width:148px;height:21px"><span class="t">20</span></div>
<div class="vl" style="left:1747px;top:407px;height:77px"></div>
<div class="tri" style="top:492px"></div><div class="grp" style="top:488px;left:1611px;letter-spacing:0.007px">Historical fill proces...</div>
<div class="lbl" style="top:513px;left:1617px;letter-spacing:0.142px">Order fill resolution</div>
<div class="sel" style="left:1754px;top:508px;width:148px;height:23px"><span class="t">Standard (Fastest)</span><svg class="chev" viewBox="0 0 10 7"><path d="M0.9 0.9 L5 5.5 L9.1 0.9" fill="none" stroke="#000" stroke-width="2.1"/></svg></div>
<div class="lbl" style="top:538px;left:1617px;letter-spacing:0.182px">Fill limit orders on to...</div>
<div class="cb" style="top:538px"></div>
<div class="lbl" style="top:562px;left:1617px;letter-spacing:0.235px">Slippage</div>
<div class="sel" style="left:1754px;top:558px;width:148px;height:21px"><span class="t">0</span></div>
<div class="vl" style="left:1747px;top:505px;height:77px"></div>
<div class="tri" style="top:590px"></div><div class="grp" style="top:586px;left:1611px;letter-spacing:-0.158px">Order handling</div>
<div class="lbl" style="top:610px;left:1617px;letter-spacing:0.142px">Entries per direction</div>
<div class="sel" style="left:1754px;top:606px;width:148px;height:21px"><span class="t">1</span></div>
<div class="lbl" style="top:635px;left:1617px;letter-spacing:0.099px">Entry handling</div>
<div class="sel" style="left:1754px;top:630px;width:148px;height:23px"><span class="t">All entries</span><svg class="chev" viewBox="0 0 10 7"><path d="M0.9 0.9 L5 5.5 L9.1 0.9" fill="none" stroke="#000" stroke-width="2.1"/></svg></div>
<div class="lbl" style="top:660px;left:1617px;letter-spacing:0.221px">Exit on session close</div>
<div class="cb" style="top:660px"><svg class="abs" style="left:1px;top:1px" width="8" height="8" viewBox="0 0 8 8"><path d="M1.2 3.8 L3.3 6.4 L6.8 2.2" fill="none" stroke="#000" stroke-width="1.8"/></svg></div>
<div class="vl" style="left:1747px;top:603px;height:77px"></div>
<div class="tri" style="top:688px"></div><div class="grp" style="top:684px;left:1611px;letter-spacing:0.012px">Order properties</div>
<div class="lbl" style="top:709px;left:1617px;letter-spacing:0.02px">Set order quantity</div>
<div class="sel" style="left:1754px;top:704px;width:148px;height:23px"><span class="t">Strategy</span><svg class="chev" viewBox="0 0 10 7"><path d="M0.9 0.9 L5 5.5 L9.1 0.9" fill="none" stroke="#000" stroke-width="2.1"/></svg></div>
<div class="lbl" style="top:735px;left:1617px;letter-spacing:0.146px">Time in force</div>
<div class="sel" style="left:1754px;top:730px;width:148px;height:23px"><span class="t">GTC</span><svg class="chev" viewBox="0 0 10 7"><path d="M0.9 0.9 L5 5.5 L9.1 0.9" fill="none" stroke="#000" stroke-width="2.1"/></svg></div>
<div class="vl" style="left:1747px;top:701px;height:55px"></div>
<svg class="abs" style="left:1600px;top:150px;mix-blend-mode:multiply" width="300" height="220" viewBox="0 0 300 220" fill="#ffff00"><polygon points="139,12 148,12.5 162,13 233,13.5 233,29.5 200,30.5 184,32.5 162,32 148,30.5 139,29.5"/><polygon points="148,139 156,136 178,135 240,135 240,150.5 185,152 161,155.5 148,156"/><polygon points="124,166 154,164 212,162.39999999999998 240,162.2 240,179 185,180.60000000000002 154,181.5 124,181.8"/><polygon points="148,185.2 271,185.2 271,201 148,202"/><polygon points="7,190 38,190 38,189 47,189 47,188 60,188 60,187 75,187 75,188 106,188 106,205 76,205 76,204 62,204 62,205 53,205 53,206 7,206"/></svg>
</body></html>
